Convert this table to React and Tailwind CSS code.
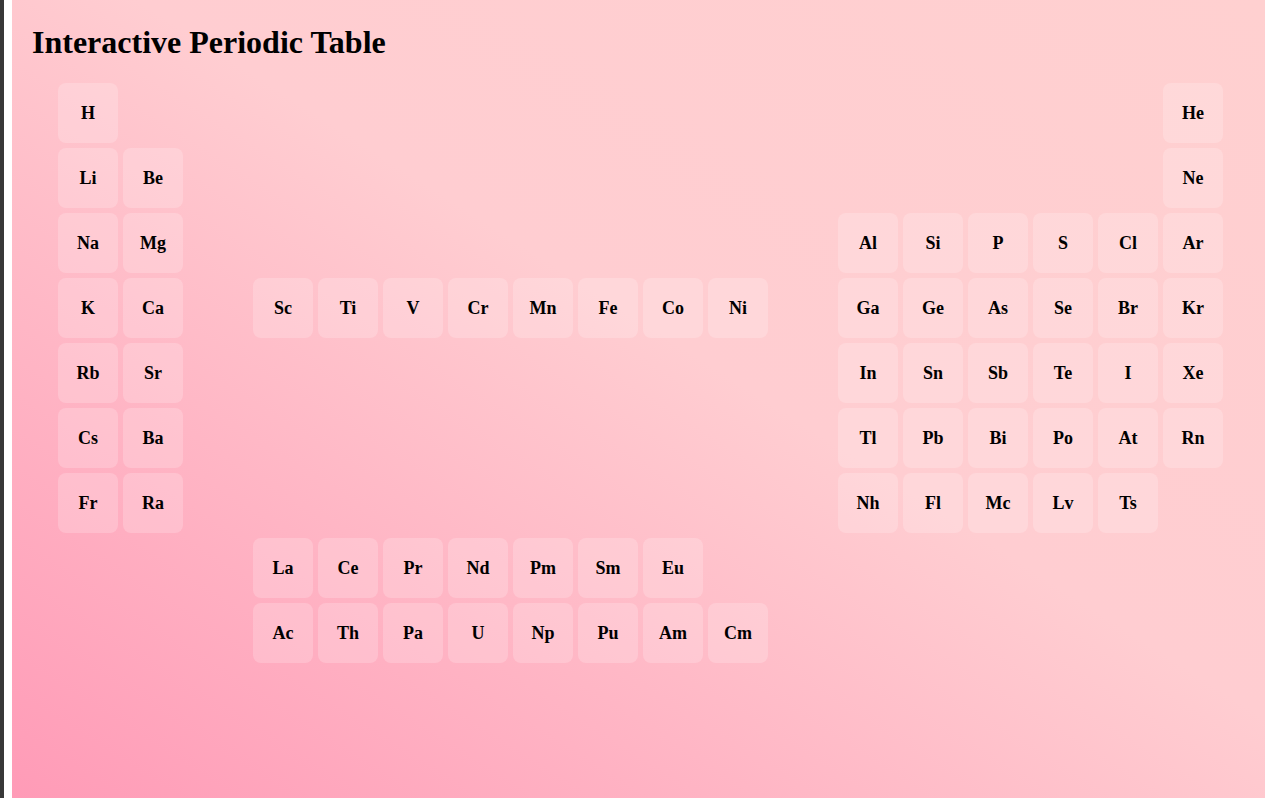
const rows = [
  [[1, 'H'], [18, 'He']],
  [[1, 'Li'], [2, 'Be'], [18, 'Ne']],
  [[1, 'Na'], [2, 'Mg'], [13, 'Al'], [14, 'Si'], [15, 'P'], [16, 'S'], [17, 'Cl'], [18, 'Ar']],
  [[1, 'K'], [2, 'Ca'], [4, 'Sc'], [5, 'Ti'], [6, 'V'], [7, 'Cr'], [8, 'Mn'], [9, 'Fe'], [10, 'Co'], [11, 'Ni'], [13, 'Ga'], [14, 'Ge'], [15, 'As'], [16, 'Se'], [17, 'Br'], [18, 'Kr']],
  [[1, 'Rb'], [2, 'Sr'], [13, 'In'], [14, 'Sn'], [15, 'Sb'], [16, 'Te'], [17, 'I'], [18, 'Xe']],
  [[1, 'Cs'], [2, 'Ba'], [13, 'Tl'], [14, 'Pb'], [15, 'Bi'], [16, 'Po'], [17, 'At'], [18, 'Rn']],
  [[1, 'Fr'], [2, 'Ra'], [13, 'Nh'], [14, 'Fl'], [15, 'Mc'], [16, 'Lv'], [17, 'Ts']],
  [[4, 'La'], [5, 'Ce'], [6, 'Pr'], [7, 'Nd'], [8, 'Pm'], [9, 'Sm'], [10, 'Eu']],
  [[4, 'Ac'], [5, 'Th'], [6, 'Pa'], [7, 'U'], [8, 'Np'], [9, 'Pu'], [10, 'Am'], [11, 'Cm']],
];

function Element({ symbol, col, row }) {
  return (
    <div
      className="flex h-[60px] w-[60px] items-center justify-center rounded-lg bg-white/20 text-[18px] font-bold text-black"
      style={{ gridColumnStart: col, gridRowStart: row }}
    >
      {symbol}
    </div>
  );
}

export default function App() {
  return (
    <div className="flex h-[798px] w-full overflow-hidden font-['Liberation_Serif',serif]">
      <div className="w-[4px] shrink-0 bg-[#383838]" />
      <div className="w-[8px] shrink-0 bg-white" />
      <main className="flex-1 bg-[linear-gradient(to_top_right,#ff9bb7_0%,#ffb6c5_30%,#ffcdd1_55%,#ffd0d0_100%)] pl-5 pt-6">
        <h1 className="text-[32px] font-bold leading-[normal] text-black">Interactive Periodic Table</h1>
        <div className="ml-[26px] mt-[22px] grid grid-cols-[repeat(18,60px)] grid-rows-[repeat(9,60px)] gap-[5px]">
          {rows.map((r, i) =>
            r.map(([col, sym]) => <Element key={sym} symbol={sym} col={col} row={i + 1} />)
          )}
        </div>
      </main>
    </div>
  );
}
